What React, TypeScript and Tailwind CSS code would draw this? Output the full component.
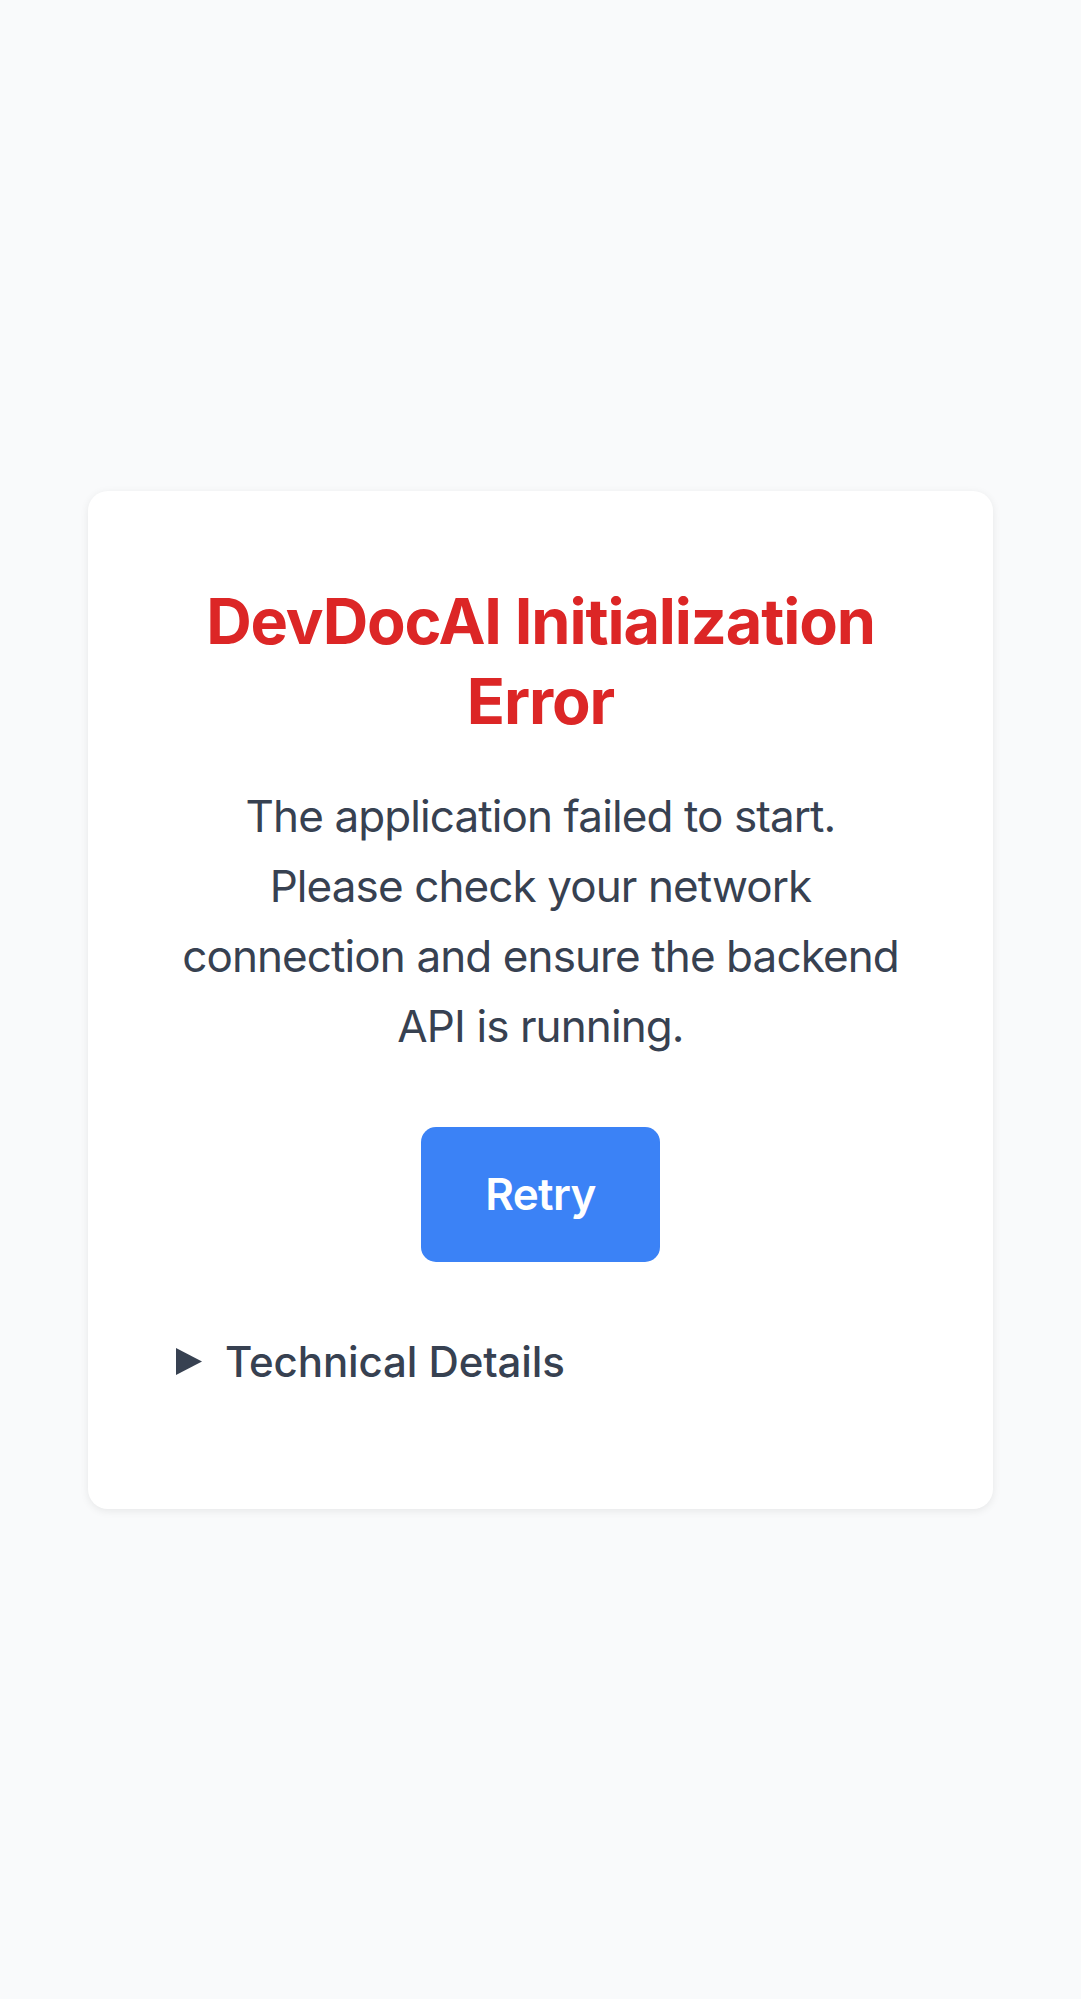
import { useState } from 'react';

export default function App() {
  const [open, setOpen] = useState(false);

  return (
    <div className="min-h-screen w-full flex items-center justify-center bg-[#f9fafb] px-[88px] font-['Inter',sans-serif]">
      <div className="w-full bg-white rounded-[20px] shadow-[0_2px_8px_rgba(0,0,0,0.08)] px-[90px] pt-[90px] pb-[117px] text-center">
        {/* Title */}
        <h1 className="text-[63px] leading-[80px] font-bold tracking-[-1.1px] text-[#dc2626] mb-[40px]">
          DevDocAI Initialization Error
        </h1>

        {/* Message */}
        <p className="text-[44px] leading-[70px] tracking-[-0.9px] text-[#374151] mb-[66px]">
          The application failed to start. Please check your network connection and ensure the backend API is running.
        </p>

        <button
          className="w-[239px] h-[135px] rounded-[15px] bg-[#3b82f6] text-white text-[44px] font-semibold tracking-[-0.6px]"
          onClick={() => window.location.reload()}
        >
          Retry
        </button>

        {/* Details */}
        <div className="mt-[70px] text-left">
          <button
            className="flex items-center gap-[23px] text-[42px] leading-[60px] font-medium tracking-[-0.1px] text-[#374151]"
            onClick={() => setOpen(!open)}
          >
            <svg width="26" height="27" viewBox="0 0 26 27" className="shrink-0 ml-[-2px]">
              <path d="M0 0 L26 13.5 L0 27 Z" fill="#374151" />
            </svg>
            Technical Details
          </button>
          {open && (
            <pre className="mt-4 text-[32px] text-[#4b5563] whitespace-pre-wrap">Failed to fetch</pre>
          )}
        </div>
      </div>
    </div>
  );
}
